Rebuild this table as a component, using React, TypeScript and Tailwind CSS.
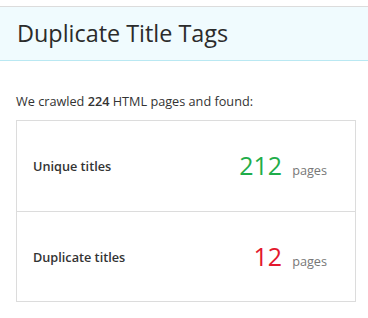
const rows = [
  { label: "Unique titles", count: 212, color: "text-[#1fad4a]" },
  { label: "Duplicate titles", count: 12, color: "text-[#e3182d]" },
];

export default function App() {
  return (
    <div className="w-[368px] h-[318px] bg-white font-['Open_Sans',sans-serif] text-[#333]">
      <div className="pt-[6px]">
        <div className="h-[55px] border-t border-b border-t-[#dcdcdc] border-b-[#b9e8f2] bg-[#f0fbfe] px-[17px] flex items-center">
          <h1 className="text-[23.4px] leading-none text-[#2b2b2b]">Duplicate Title Tags</h1>
        </div>
      </div>
      <div className="pl-4 pr-3 pt-[31px]">
        <p className="text-[12.7px] leading-[18px] text-[#333]">
          We crawled <span className="font-semibold">224</span> HTML pages and found:
        </p>
        <div className="mt-[10px] border border-[#dcdcdc]">
          {rows.map((r, i) => (
            <div
              key={r.label}
              className={`flex items-center justify-between pl-4 pr-[28px] h-[90px] ${
                i > 0 ? "border-t border-[#dcdcdc]" : ""
              }`}
            >
              <span className="text-[12.7px] font-semibold text-[#333] pt-[2px]">{r.label}</span>
              <span className="flex items-baseline gap-[10px] pt-[2px]">
                <span className={`text-[25px] leading-none ${r.color}`}>{r.count}</span>
                <span className="text-[12.7px] text-[#777]">pages</span>
              </span>
            </div>
          ))}
        </div>
      </div>
    </div>
  );
}
